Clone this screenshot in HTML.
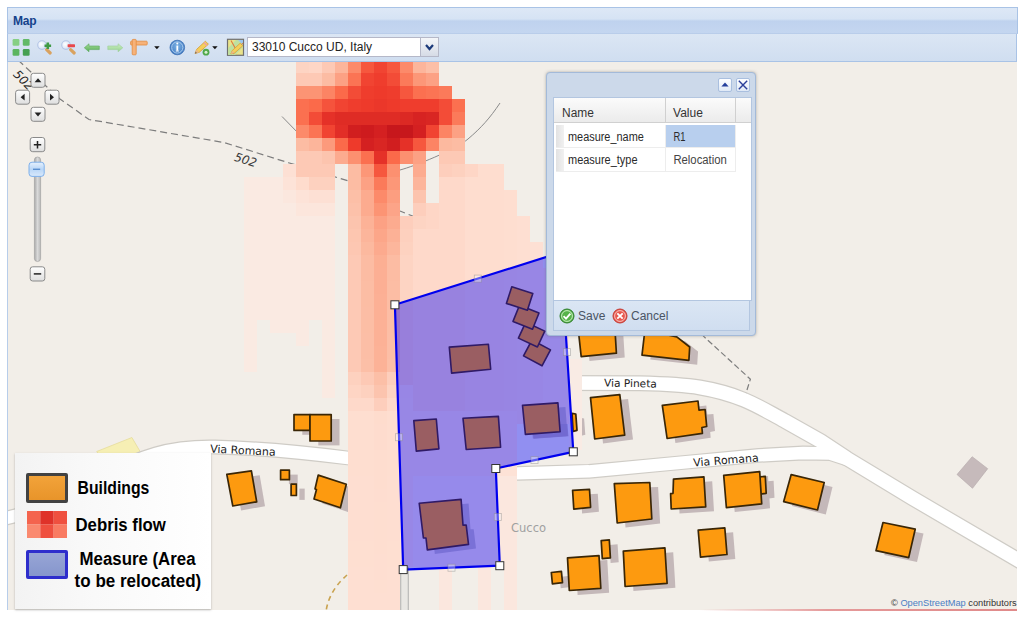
<!DOCTYPE html>
<html><head><meta charset="utf-8"><title>Map</title>
<style>
html,body{margin:0;padding:0;background:#fff;}
body{width:1024px;height:622px;position:relative;overflow:hidden;font-family:"Liberation Sans",sans-serif;}
.abs{position:absolute;}
#hdr{left:7px;top:7px;width:1011px;height:27px;box-sizing:border-box;border:1px solid #a9c3e6;border-bottom-color:#b9cdea;
 background:linear-gradient(#dde8f6 0%,#d6e3f4 44%,#bfd2ee 52%,#c4d6f0 100%);}
#hdr span{position:absolute;left:5px;top:6px;font:bold 12px "Liberation Sans",sans-serif;color:#15428b;letter-spacing:-0.2px}
#tb{left:7px;top:34px;width:1010px;height:28px;box-sizing:border-box;border-left:1px solid #a9c3e6;border-right:1px solid #a9c3e6;border-bottom:1px solid #a9c3e6;
 background:linear-gradient(#dbe6f4,#d0def0);}
#mapframe{left:7px;top:62px;width:1px;height:548px;background:#b7cdea;}
#combo{left:247px;top:37px;width:174px;height:20px;box-sizing:border-box;border:1px solid #b5b8c8;background:#fff;font:12px "Liberation Sans",sans-serif;color:#222;line-height:19px;padding-left:4px;white-space:nowrap}
#trig{left:421px;top:37px;width:18px;height:20px;box-sizing:border-box;border:1px solid #b5b8c8;border-left:none;background:linear-gradient(#f4f6f9,#d6dbe6);}
/* dialog */
#dlg{left:546px;top:72px;width:210px;height:264px;box-sizing:border-box;border:1px solid #a3bad9;border-radius:4px;background:#ccd9ea;box-shadow:0 0 3px rgba(100,100,100,.5)}
#dlg .body{left:6px;top:24px;width:199px;height:204px;background:#fff;border:1px solid #b3c6e0;box-sizing:border-box}
#dlg .gh{left:0;top:0;width:197px;height:25px;background:linear-gradient(#fbfbfb,#ebebeb);border-bottom:1px solid #d0d0d0;box-sizing:border-box}
#dlg .foot{left:6px;top:228px;width:197px;height:30px;background:linear-gradient(#dbe6f4,#d0def0);border:1px solid #b3c6e0;border-top:none;box-sizing:border-box}
.seg{font-family:"Liberation Sans",sans-serif;font-size:12.5px;color:#222;white-space:nowrap}
.tool{width:14px;height:14px;box-sizing:border-box;border:1px solid #a9bfdf;border-radius:2px;background:linear-gradient(#fdfeff,#dfe9f6)}
/* legend */
#legend{left:15px;top:453px;width:196px;height:156px;background:linear-gradient(90deg,#f3f3f3,#f9f9f9 40%,#ffffff 100%);box-shadow:0 1px 2px rgba(120,120,120,.5)}
.lt{font:bold 15.5px "Liberation Sans",sans-serif;color:#111;white-space:nowrap}
.navb{width:15px;height:15px;box-sizing:border-box;border:1px solid #8c8c8c;border-radius:3px;background:linear-gradient(#ffffff,#e4e4e4);box-shadow:0 0 0 1px rgba(255,255,255,.6)}
</style></head><body>
<div id="hdr" class="abs"><span>Map</span></div>
<div id="tb" class="abs"></div>
<div id="mapframe" class="abs"></div>
<svg width="1009" height="548" viewBox="8 62 1009 548" style="position:absolute;left:8px;top:62px">
<g><rect x="0" y="0" width="1024" height="622" fill="#f2eee8"/>
<polygon points="96.7,451.5 131.9,437.5 141.0,453.0 110.0,470.0" fill="#f6efb4" stroke="#e6dc9a" stroke-width="0.8"/>
<path d="M-5,520 C30,515 60,500 100,478 S170,446 215,447 S300,452 348,458 L420,466 L496,474 L517.8,473.4 L589,471.3 L678,463 L759,455.4 L803,453 L830,453.5 L850,460" fill="none" stroke="#cfccc6" stroke-width="14.8" stroke-linejoin="round"/>
<path d="M560,383 L640,383.3 C670,384 690,385.8 700,387.5 C718,390.5 730,394 744,399.8 C760,406.5 770,413 785,421 L820.5,441 L847,458.5 L912,497.9 L1030,567" fill="none" stroke="#cfccc6" stroke-width="16.0" stroke-linejoin="round"/>
<path d="M-5,520 C30,515 60,500 100,478 S170,446 215,447 S300,452 348,458 L420,466 L496,474 L517.8,473.4 L589,471.3 L678,463 L759,455.4 L803,453 L830,453.5 L850,460" fill="none" stroke="#ffffff" stroke-width="12.4" stroke-linejoin="round"/>
<path d="M560,383 L640,383.3 C670,384 690,385.8 700,387.5 C718,390.5 730,394 744,399.8 C760,406.5 770,413 785,421 L820.5,441 L847,458.5 L912,497.9 L1030,567" fill="none" stroke="#ffffff" stroke-width="13.6" stroke-linejoin="round"/>
<path d="M404.5,560 L404.5,640" fill="none" stroke="#a9a9a9" stroke-width="8.4"/><path d="M404.5,560 L404.5,640" fill="none" stroke="#e9e7e3" stroke-width="6.6"/>
<path d="M18,60 L60,99 L89,119.5 L224,142.5 L288.5,162.7 L348.6,181 L400,211 L420,219" fill="none" stroke="#7d7d7d" stroke-width="1.2" stroke-dasharray="7,4"/>
<path d="M690,320 L704,336.7 L750.4,379.2 L746,393" fill="none" stroke="#7d7d7d" stroke-width="1.2" stroke-dasharray="6,3"/>
<path d="M282,116.5 L300,135 C315,148 330,155 348,161 S385,174 400,170 S455,150 468,139 S490,118 500,103" fill="none" stroke="#8a8a8a" stroke-width="1"/>
<path d="M347,575 C338,583 328,595 326,612" fill="none" stroke="#c9a24f" stroke-width="1.6" stroke-dasharray="5,4"/></g>
<g><polygon points="302.3,419.0 318.3,419.0 318.3,434.8 302.3,434.8" fill="#c4b8b9"/>
<polygon points="318.3,419.0 339.5,419.0 339.5,445.4 318.3,445.4" fill="#c4b8b9"/>
<polygon points="235.1,478.8 259.7,475.3 265.0,506.2 241.1,510.4" fill="#c4b8b9"/>
<polygon points="288.9,474.6 297.7,474.6 297.7,484.1 288.9,484.1" fill="#c4b8b9"/>
<polygon points="299.4,488.6 304.7,488.6 304.7,499.9 299.4,499.9" fill="#c4b8b9"/>
<polygon points="326.5,479.5 354.6,488.6 348.7,512.2 322.3,503.4 324.8,493.9 323.3,493.4" fill="#c4b8b9"/>
<polygon points="799.5,479.0 832.5,486.9 825.8,514.4 792.0,506.0" fill="#c4b8b9"/>
<polygon points="891.3,526.9 923.5,533.6 917.0,562.0 884.3,555.0" fill="#c4b8b9"/>
<polygon points="586.6,334.4 623.3,334.4 624.7,357.6 589.5,361.0" fill="#c4b8b9"/>
<polygon points="653.2,334.4 685.1,341.2 698.0,351.4 697.2,364.7 650.3,359.5" fill="#c4b8b9"/>
<polygon points="598.8,402.0 628.1,399.1 633.0,439.6 603.0,443.4" fill="#c4b8b9"/>
<polygon points="670.6,409.7 706.3,405.4 707.3,414.5 713.4,413.9 715.0,430.9 710.2,431.9 710.7,437.7 675.4,442.9" fill="#c4b8b9"/>
<polygon points="580.3,417.8 584.1,418.4 585.3,434.8 581.4,435.7" fill="#c4b8b9"/>
<polygon points="580.9,494.8 597.8,493.7 598.9,511.7 582.1,513.5" fill="#c4b8b9"/>
<polygon points="622.6,488.0 658.1,486.9 660.1,523.4 625.5,527.4" fill="#c4b8b9"/>
<polygon points="609.5,545.0 617.6,544.3 618.7,562.3 610.6,563.0" fill="#c4b8b9"/>
<polygon points="575.8,562.3 607.3,560.0 609.1,592.7 577.6,594.9" fill="#c4b8b9"/>
<polygon points="559.6,576.9 569.7,575.8 570.8,587.0 560.7,588.2" fill="#c4b8b9"/>
<polygon points="631.6,555.5 673.2,552.2 675.4,587.7 633.4,590.9" fill="#c4b8b9"/>
<polygon points="681.8,483.5 712.2,481.3 714.0,511.2 679.5,513.4 678.9,498.1 681.3,497.7" fill="#c4b8b9"/>
<polygon points="768.0,481.3 773.6,480.8 774.5,497.7 768.8,498.6" fill="#c4b8b9"/>
<polygon points="732.0,479.7 768.0,476.1 770.0,508.3 734.7,512.1" fill="#c4b8b9"/>
<polygon points="706.5,534.6 733.1,532.3 735.3,558.9 708.8,561.6" fill="#c4b8b9"/>
<polygon points="457.6,351.5 496.7,348.6 499.0,373.7 459.9,377.5" fill="#c4b8b9"/>
<polygon points="422.1,425.0 444.6,423.4 447.2,453.3 424.6,455.5" fill="#c4b8b9"/>
<polygon points="471.3,422.7 506.7,420.8 508.9,451.7 474.5,453.9" fill="#c4b8b9"/>
<polygon points="530.8,409.8 566.2,407.3 568.4,436.2 533.7,438.8" fill="#c4b8b9"/>
<polygon points="427.5,507.6 469.4,503.8 471.3,529.5 474.5,529.5 476.8,548.8 435.6,554.3 434.3,542.4 431.7,542.4" fill="#c4b8b9"/>
<polygon points="540.3,344.4 558.8,354.3 550.3,370.2 531.8,360.3" fill="#c4b8b9"/>
<polygon points="534.1,326.6 553.1,335.5 545.7,351.4 526.7,342.5" fill="#c4b8b9"/>
<polygon points="527.8,309.6 547.3,317.4 540.8,333.6 521.3,325.8" fill="#c4b8b9"/>
<polygon points="520.1,291.2 541.1,298.0 535.7,314.6 514.7,307.8" fill="#c4b8b9"/>
<polygon points="972.2,456.7 987.7,468.7 972.5,488.3 957.0,474.5" fill="#c6babb" stroke="#b3a8a9" stroke-width="0.6"/></g>
<g shape-rendering="crispEdges"><rect x="295.7" y="59.6" width="13.16" height="13.16" fill="#fdd4c3"/>
<rect x="308.7" y="59.6" width="13.16" height="13.16" fill="#fed6c6"/>
<rect x="321.7" y="59.6" width="13.16" height="13.16" fill="#fdc9b5"/>
<rect x="334.7" y="59.6" width="13.16" height="13.16" fill="#fcb59b"/>
<rect x="347.7" y="59.6" width="13.16" height="13.16" fill="#fc8a6a"/>
<rect x="360.8" y="59.6" width="13.16" height="13.16" fill="#f6573e"/>
<rect x="373.8" y="59.6" width="13.16" height="13.16" fill="#f14432"/>
<rect x="386.8" y="59.6" width="13.16" height="13.16" fill="#f6573e"/>
<rect x="399.8" y="59.6" width="13.16" height="13.16" fill="#fc8a6a"/>
<rect x="412.8" y="59.6" width="13.16" height="13.16" fill="#fcb59b"/>
<rect x="425.8" y="59.6" width="13.16" height="13.16" fill="#fcbfa7"/>
<rect x="295.7" y="72.6" width="13.16" height="13.16" fill="#fdc9b5"/>
<rect x="308.7" y="72.6" width="13.16" height="13.16" fill="#fdc9b5"/>
<rect x="321.7" y="72.6" width="13.16" height="13.16" fill="#fcbca3"/>
<rect x="334.7" y="72.6" width="13.16" height="13.16" fill="#fca184"/>
<rect x="347.7" y="72.6" width="13.16" height="13.16" fill="#fb7454"/>
<rect x="360.8" y="72.6" width="13.16" height="13.16" fill="#f14432"/>
<rect x="373.8" y="72.6" width="13.16" height="13.16" fill="#ef3d2d"/>
<rect x="386.8" y="72.6" width="13.16" height="13.16" fill="#f34c37"/>
<rect x="399.8" y="72.6" width="13.16" height="13.16" fill="#fb7a5a"/>
<rect x="412.8" y="72.6" width="13.16" height="13.16" fill="#fc9778"/>
<rect x="425.8" y="72.6" width="13.16" height="13.16" fill="#fca184"/>
<rect x="295.7" y="85.6" width="13.16" height="13.16" fill="#fc9474"/>
<rect x="308.7" y="85.6" width="13.16" height="13.16" fill="#fc9474"/>
<rect x="321.7" y="85.6" width="13.16" height="13.16" fill="#fc8464"/>
<rect x="334.7" y="85.6" width="13.16" height="13.16" fill="#fb6a4a"/>
<rect x="347.7" y="85.6" width="13.16" height="13.16" fill="#f34c37"/>
<rect x="360.8" y="85.6" width="13.16" height="13.16" fill="#ef3d2d"/>
<rect x="373.8" y="85.6" width="13.16" height="13.16" fill="#ee3a2b"/>
<rect x="386.8" y="85.6" width="13.16" height="13.16" fill="#ef3d2d"/>
<rect x="399.8" y="85.6" width="13.16" height="13.16" fill="#f6573e"/>
<rect x="412.8" y="85.6" width="13.16" height="13.16" fill="#fb7050"/>
<rect x="425.8" y="85.6" width="13.16" height="13.16" fill="#fb7454"/>
<rect x="438.8" y="85.6" width="13.16" height="13.16" fill="#fb7a5a"/>
<rect x="295.7" y="98.6" width="13.16" height="13.16" fill="#fb7050"/>
<rect x="308.7" y="98.6" width="13.16" height="13.16" fill="#fb6a4a"/>
<rect x="321.7" y="98.6" width="13.16" height="13.16" fill="#f5533c"/>
<rect x="334.7" y="98.6" width="13.16" height="13.16" fill="#f14432"/>
<rect x="347.7" y="98.6" width="13.16" height="13.16" fill="#ef3d2d"/>
<rect x="360.8" y="98.6" width="13.16" height="13.16" fill="#ee3a2b"/>
<rect x="373.8" y="98.6" width="13.16" height="13.16" fill="#eb372a"/>
<rect x="386.8" y="98.6" width="13.16" height="13.16" fill="#ee3a2b"/>
<rect x="399.8" y="98.6" width="13.16" height="13.16" fill="#ef3d2d"/>
<rect x="412.8" y="98.6" width="13.16" height="13.16" fill="#ef3d2d"/>
<rect x="425.8" y="98.6" width="13.16" height="13.16" fill="#ef3d2d"/>
<rect x="438.8" y="98.6" width="13.16" height="13.16" fill="#f34c37"/>
<rect x="451.8" y="98.6" width="13.16" height="13.16" fill="#fb7050"/>
<rect x="295.7" y="111.6" width="13.16" height="13.16" fill="#fb7050"/>
<rect x="308.7" y="111.6" width="13.16" height="13.16" fill="#f34c37"/>
<rect x="321.7" y="111.6" width="13.16" height="13.16" fill="#e53128"/>
<rect x="334.7" y="111.6" width="13.16" height="13.16" fill="#df2c25"/>
<rect x="347.7" y="111.6" width="13.16" height="13.16" fill="#df2c25"/>
<rect x="360.8" y="111.6" width="13.16" height="13.16" fill="#df2c25"/>
<rect x="373.8" y="111.6" width="13.16" height="13.16" fill="#df2c25"/>
<rect x="386.8" y="111.6" width="13.16" height="13.16" fill="#df2c25"/>
<rect x="399.8" y="111.6" width="13.16" height="13.16" fill="#dc2924"/>
<rect x="412.8" y="111.6" width="13.16" height="13.16" fill="#d72322"/>
<rect x="425.8" y="111.6" width="13.16" height="13.16" fill="#d92623"/>
<rect x="438.8" y="111.6" width="13.16" height="13.16" fill="#f34c37"/>
<rect x="451.8" y="111.6" width="13.16" height="13.16" fill="#fb7a5a"/>
<rect x="295.7" y="124.7" width="13.16" height="13.16" fill="#fc8a6a"/>
<rect x="308.7" y="124.7" width="13.16" height="13.16" fill="#fb7454"/>
<rect x="321.7" y="124.7" width="13.16" height="13.16" fill="#f14432"/>
<rect x="334.7" y="124.7" width="13.16" height="13.16" fill="#e22e27"/>
<rect x="347.7" y="124.7" width="13.16" height="13.16" fill="#d11e1f"/>
<rect x="360.8" y="124.7" width="13.16" height="13.16" fill="#ce1b1e"/>
<rect x="373.8" y="124.7" width="13.16" height="13.16" fill="#d42021"/>
<rect x="386.8" y="124.7" width="13.16" height="13.16" fill="#c7171c"/>
<rect x="399.8" y="124.7" width="13.16" height="13.16" fill="#c7171c"/>
<rect x="412.8" y="124.7" width="13.16" height="13.16" fill="#d42021"/>
<rect x="425.8" y="124.7" width="13.16" height="13.16" fill="#f14432"/>
<rect x="438.8" y="124.7" width="13.16" height="13.16" fill="#fc8464"/>
<rect x="451.8" y="124.7" width="13.16" height="13.16" fill="#fca184"/>
<rect x="295.7" y="137.7" width="13.16" height="13.16" fill="#fcbca3"/>
<rect x="308.7" y="137.7" width="13.16" height="13.16" fill="#fcb59b"/>
<rect x="321.7" y="137.7" width="13.16" height="13.16" fill="#fc9a7c"/>
<rect x="334.7" y="137.7" width="13.16" height="13.16" fill="#fb6a4a"/>
<rect x="347.7" y="137.7" width="13.16" height="13.16" fill="#ee3a2b"/>
<rect x="360.8" y="137.7" width="13.16" height="13.16" fill="#d42021"/>
<rect x="373.8" y="137.7" width="13.16" height="13.16" fill="#d92623"/>
<rect x="386.8" y="137.7" width="13.16" height="13.16" fill="#d11e1f"/>
<rect x="399.8" y="137.7" width="13.16" height="13.16" fill="#e53128"/>
<rect x="412.8" y="137.7" width="13.16" height="13.16" fill="#f6573e"/>
<rect x="425.8" y="137.7" width="13.16" height="13.16" fill="#fc8464"/>
<rect x="438.8" y="137.7" width="13.16" height="13.16" fill="#fcb99f"/>
<rect x="451.8" y="137.7" width="13.16" height="13.16" fill="#fcbca3"/>
<rect x="295.7" y="150.7" width="13.16" height="13.16" fill="#fdc9b5"/>
<rect x="308.7" y="150.7" width="13.16" height="13.16" fill="#fdc9b5"/>
<rect x="321.7" y="150.7" width="13.16" height="13.16" fill="#fcc4ae"/>
<rect x="334.7" y="150.7" width="13.16" height="13.16" fill="#fcab8f"/>
<rect x="347.7" y="150.7" width="13.16" height="13.16" fill="#fc9070"/>
<rect x="360.8" y="150.7" width="13.16" height="13.16" fill="#fb7050"/>
<rect x="373.8" y="150.7" width="13.16" height="13.16" fill="#e53128"/>
<rect x="386.8" y="150.7" width="13.16" height="13.16" fill="#fb6a4a"/>
<rect x="399.8" y="150.7" width="13.16" height="13.16" fill="#fc9070"/>
<rect x="412.8" y="150.7" width="13.16" height="13.16" fill="#fca184"/>
<rect x="438.8" y="150.7" width="13.16" height="13.16" fill="#fdc9b5"/>
<rect x="451.8" y="150.7" width="13.16" height="13.16" fill="#fdc9b5"/>
<rect x="282.7" y="163.7" width="13.16" height="13.16" fill="#fde0d4"/>
<rect x="295.7" y="163.7" width="13.16" height="13.16" fill="#fdc9b5"/>
<rect x="308.7" y="163.7" width="13.16" height="13.16" fill="#fdc9b5"/>
<rect x="321.7" y="163.7" width="13.16" height="13.16" fill="#fdc9b5"/>
<rect x="347.7" y="163.7" width="13.16" height="13.16" fill="#fcbca3"/>
<rect x="360.8" y="163.7" width="13.16" height="13.16" fill="#fc9778"/>
<rect x="373.8" y="163.7" width="13.16" height="13.16" fill="#f6573e"/>
<rect x="386.8" y="163.7" width="13.16" height="13.16" fill="#fc9070"/>
<rect x="412.8" y="163.7" width="13.16" height="13.16" fill="#fcab8f"/>
<rect x="438.8" y="163.7" width="13.16" height="13.16" fill="#fdcebc"/>
<rect x="451.8" y="163.7" width="13.16" height="13.16" fill="#fdd1bf"/>
<rect x="464.8" y="163.7" width="13.16" height="13.16" fill="#fed6c6"/>
<rect x="477.8" y="163.7" width="13.16" height="13.16" fill="#feddcf"/>
<rect x="490.9" y="163.7" width="13.16" height="13.16" fill="#feddcf"/>
<rect x="243.7" y="176.7" width="13.16" height="13.16" fill="#faeae2"/>
<rect x="256.7" y="176.7" width="13.16" height="13.16" fill="#faeae2"/>
<rect x="269.7" y="176.7" width="13.16" height="13.16" fill="#faeae2"/>
<rect x="282.7" y="176.7" width="13.16" height="13.16" fill="#fde3d8"/>
<rect x="295.7" y="176.7" width="13.16" height="13.16" fill="#fedccd"/>
<rect x="308.7" y="176.7" width="13.16" height="13.16" fill="#fdd1bf"/>
<rect x="321.7" y="176.7" width="13.16" height="13.16" fill="#fdd1bf"/>
<rect x="347.7" y="176.7" width="13.16" height="13.16" fill="#fcbca3"/>
<rect x="360.8" y="176.7" width="13.16" height="13.16" fill="#fca184"/>
<rect x="373.8" y="176.7" width="13.16" height="13.16" fill="#fb7a5a"/>
<rect x="386.8" y="176.7" width="13.16" height="13.16" fill="#fc9778"/>
<rect x="412.8" y="176.7" width="13.16" height="13.16" fill="#fcb59b"/>
<rect x="438.8" y="176.7" width="13.16" height="13.16" fill="#fed9ca"/>
<rect x="451.8" y="176.7" width="13.16" height="13.16" fill="#fed9ca"/>
<rect x="464.8" y="176.7" width="13.16" height="13.16" fill="#feddcf"/>
<rect x="477.8" y="176.7" width="13.16" height="13.16" fill="#feddcf"/>
<rect x="490.9" y="176.7" width="13.16" height="13.16" fill="#feddcf"/>
<rect x="243.7" y="189.7" width="13.16" height="13.16" fill="#faeae2"/>
<rect x="256.7" y="189.7" width="13.16" height="13.16" fill="#faeae2"/>
<rect x="269.7" y="189.7" width="13.16" height="13.16" fill="#faeae2"/>
<rect x="282.7" y="189.7" width="13.16" height="13.16" fill="#fbe7de"/>
<rect x="295.7" y="189.7" width="13.16" height="13.16" fill="#fde3d8"/>
<rect x="308.7" y="189.7" width="13.16" height="13.16" fill="#fde0d4"/>
<rect x="321.7" y="189.7" width="13.16" height="13.16" fill="#fde0d4"/>
<rect x="347.7" y="189.7" width="13.16" height="13.16" fill="#fcbfa7"/>
<rect x="360.8" y="189.7" width="13.16" height="13.16" fill="#fcab8f"/>
<rect x="373.8" y="189.7" width="13.16" height="13.16" fill="#fc8a6a"/>
<rect x="386.8" y="189.7" width="13.16" height="13.16" fill="#fc9e80"/>
<rect x="412.8" y="189.7" width="13.16" height="13.16" fill="#fcc4ae"/>
<rect x="438.8" y="189.7" width="13.16" height="13.16" fill="#fed9ca"/>
<rect x="451.8" y="189.7" width="13.16" height="13.16" fill="#fed9ca"/>
<rect x="464.8" y="189.7" width="13.16" height="13.16" fill="#feddcf"/>
<rect x="477.8" y="189.7" width="13.16" height="13.16" fill="#feddcf"/>
<rect x="490.9" y="189.7" width="13.16" height="13.16" fill="#feddcf"/>
<rect x="503.9" y="189.7" width="13.16" height="13.16" fill="#feded0"/>
<rect x="243.7" y="202.7" width="13.16" height="13.16" fill="#faeae2"/>
<rect x="256.7" y="202.7" width="13.16" height="13.16" fill="#faeae2"/>
<rect x="269.7" y="202.7" width="13.16" height="13.16" fill="#faeae2"/>
<rect x="282.7" y="202.7" width="13.16" height="13.16" fill="#faeae2"/>
<rect x="295.7" y="202.7" width="13.16" height="13.16" fill="#fce6dc"/>
<rect x="308.7" y="202.7" width="13.16" height="13.16" fill="#fce6dc"/>
<rect x="321.7" y="202.7" width="13.16" height="13.16" fill="#fce6dc"/>
<rect x="347.7" y="202.7" width="13.16" height="13.16" fill="#fcc1aa"/>
<rect x="360.8" y="202.7" width="13.16" height="13.16" fill="#fcab8f"/>
<rect x="373.8" y="202.7" width="13.16" height="13.16" fill="#fc9474"/>
<rect x="386.8" y="202.7" width="13.16" height="13.16" fill="#fca488"/>
<rect x="412.8" y="202.7" width="13.16" height="13.16" fill="#fdcebc"/>
<rect x="425.8" y="202.7" width="13.16" height="13.16" fill="#fed6c6"/>
<rect x="438.8" y="202.7" width="13.16" height="13.16" fill="#fed9ca"/>
<rect x="451.8" y="202.7" width="13.16" height="13.16" fill="#fed9ca"/>
<rect x="464.8" y="202.7" width="13.16" height="13.16" fill="#feddcf"/>
<rect x="477.8" y="202.7" width="13.16" height="13.16" fill="#feddcf"/>
<rect x="490.9" y="202.7" width="13.16" height="13.16" fill="#feddcf"/>
<rect x="503.9" y="202.7" width="13.16" height="13.16" fill="#feded0"/>
<rect x="243.7" y="215.7" width="13.16" height="13.16" fill="#faeae2"/>
<rect x="256.7" y="215.7" width="13.16" height="13.16" fill="#faeae2"/>
<rect x="269.7" y="215.7" width="13.16" height="13.16" fill="#faeae2"/>
<rect x="282.7" y="215.7" width="13.16" height="13.16" fill="#faeae2"/>
<rect x="295.7" y="215.7" width="13.16" height="13.16" fill="#faeae2"/>
<rect x="308.7" y="215.7" width="13.16" height="13.16" fill="#faeae2"/>
<rect x="321.7" y="215.7" width="13.16" height="13.16" fill="#faeae2"/>
<rect x="347.7" y="215.7" width="13.16" height="13.16" fill="#fcc4ae"/>
<rect x="360.8" y="215.7" width="13.16" height="13.16" fill="#fcb297"/>
<rect x="373.8" y="215.7" width="13.16" height="13.16" fill="#fca184"/>
<rect x="386.8" y="215.7" width="13.16" height="13.16" fill="#fcab8f"/>
<rect x="399.8" y="215.7" width="13.16" height="13.16" fill="#fdcebc"/>
<rect x="412.8" y="215.7" width="13.16" height="13.16" fill="#fdd4c3"/>
<rect x="425.8" y="215.7" width="13.16" height="13.16" fill="#fed6c6"/>
<rect x="438.8" y="215.7" width="13.16" height="13.16" fill="#fed9ca"/>
<rect x="451.8" y="215.7" width="13.16" height="13.16" fill="#fed9ca"/>
<rect x="464.8" y="215.7" width="13.16" height="13.16" fill="#feddcf"/>
<rect x="477.8" y="215.7" width="13.16" height="13.16" fill="#feddcf"/>
<rect x="490.9" y="215.7" width="13.16" height="13.16" fill="#feddcf"/>
<rect x="503.9" y="215.7" width="13.16" height="13.16" fill="#feded0"/>
<rect x="516.9" y="215.7" width="13.16" height="13.16" fill="#fedfd2"/>
<rect x="243.7" y="228.7" width="13.16" height="13.16" fill="#faeae2"/>
<rect x="256.7" y="228.7" width="13.16" height="13.16" fill="#faeae2"/>
<rect x="269.7" y="228.7" width="13.16" height="13.16" fill="#faeae2"/>
<rect x="282.7" y="228.7" width="13.16" height="13.16" fill="#faeae2"/>
<rect x="295.7" y="228.7" width="13.16" height="13.16" fill="#faeae2"/>
<rect x="308.7" y="228.7" width="13.16" height="13.16" fill="#faeae2"/>
<rect x="321.7" y="228.7" width="13.16" height="13.16" fill="#faeae2"/>
<rect x="347.7" y="228.7" width="13.16" height="13.16" fill="#fdc6b0"/>
<rect x="360.8" y="228.7" width="13.16" height="13.16" fill="#fcb59b"/>
<rect x="373.8" y="228.7" width="13.16" height="13.16" fill="#fca689"/>
<rect x="386.8" y="228.7" width="13.16" height="13.16" fill="#fcb196"/>
<rect x="399.8" y="228.7" width="13.16" height="13.16" fill="#fdd0be"/>
<rect x="412.8" y="228.7" width="13.16" height="13.16" fill="#fed9ca"/>
<rect x="425.8" y="228.7" width="13.16" height="13.16" fill="#fed9ca"/>
<rect x="438.8" y="228.7" width="13.16" height="13.16" fill="#fed9ca"/>
<rect x="451.8" y="228.7" width="13.16" height="13.16" fill="#fed9ca"/>
<rect x="464.8" y="228.7" width="13.16" height="13.16" fill="#feddcf"/>
<rect x="477.8" y="228.7" width="13.16" height="13.16" fill="#feddcf"/>
<rect x="490.9" y="228.7" width="13.16" height="13.16" fill="#feddcf"/>
<rect x="503.9" y="228.7" width="13.16" height="13.16" fill="#feded0"/>
<rect x="516.9" y="228.7" width="13.16" height="13.16" fill="#fedfd2"/>
<rect x="243.7" y="241.7" width="13.16" height="13.16" fill="#faeae2"/>
<rect x="256.7" y="241.7" width="13.16" height="13.16" fill="#faeae2"/>
<rect x="269.7" y="241.7" width="13.16" height="13.16" fill="#faeae2"/>
<rect x="282.7" y="241.7" width="13.16" height="13.16" fill="#faeae2"/>
<rect x="295.7" y="241.7" width="13.16" height="13.16" fill="#faeae2"/>
<rect x="308.7" y="241.7" width="13.16" height="13.16" fill="#faeae2"/>
<rect x="321.7" y="241.7" width="13.16" height="13.16" fill="#faeae2"/>
<rect x="347.7" y="241.7" width="13.16" height="13.16" fill="#fdc7b2"/>
<rect x="360.8" y="241.7" width="13.16" height="13.16" fill="#fcb99f"/>
<rect x="373.8" y="241.7" width="13.16" height="13.16" fill="#fcaa8e"/>
<rect x="386.8" y="241.7" width="13.16" height="13.16" fill="#fcb69c"/>
<rect x="399.8" y="241.7" width="13.16" height="13.16" fill="#fdd2c0"/>
<rect x="412.8" y="241.7" width="13.16" height="13.16" fill="#fed9ca"/>
<rect x="425.8" y="241.7" width="13.16" height="13.16" fill="#fed9ca"/>
<rect x="438.8" y="241.7" width="13.16" height="13.16" fill="#fed9ca"/>
<rect x="451.8" y="241.7" width="13.16" height="13.16" fill="#fed9ca"/>
<rect x="464.8" y="241.7" width="13.16" height="13.16" fill="#feddcf"/>
<rect x="477.8" y="241.7" width="13.16" height="13.16" fill="#feddcf"/>
<rect x="490.9" y="241.7" width="13.16" height="13.16" fill="#feddcf"/>
<rect x="503.9" y="241.7" width="13.16" height="13.16" fill="#feded0"/>
<rect x="516.9" y="241.7" width="13.16" height="13.16" fill="#fedfd2"/>
<rect x="529.9" y="241.7" width="13.16" height="13.16" fill="#fde0d4"/>
<rect x="243.7" y="254.8" width="13.16" height="13.16" fill="#faeae2"/>
<rect x="256.7" y="254.8" width="13.16" height="13.16" fill="#faeae2"/>
<rect x="269.7" y="254.8" width="13.16" height="13.16" fill="#faeae2"/>
<rect x="282.7" y="254.8" width="13.16" height="13.16" fill="#faeae2"/>
<rect x="295.7" y="254.8" width="13.16" height="13.16" fill="#faeae2"/>
<rect x="308.7" y="254.8" width="13.16" height="13.16" fill="#faeae2"/>
<rect x="321.7" y="254.8" width="13.16" height="13.16" fill="#faeae2"/>
<rect x="347.7" y="254.8" width="13.16" height="13.16" fill="#fdc9b5"/>
<rect x="360.8" y="254.8" width="13.16" height="13.16" fill="#fcbca3"/>
<rect x="373.8" y="254.8" width="13.16" height="13.16" fill="#fcaf93"/>
<rect x="386.8" y="254.8" width="13.16" height="13.16" fill="#fcbca3"/>
<rect x="399.8" y="254.8" width="13.16" height="13.16" fill="#fdd4c3"/>
<rect x="412.8" y="254.8" width="13.16" height="13.16" fill="#fed9ca"/>
<rect x="425.8" y="254.8" width="13.16" height="13.16" fill="#fed9ca"/>
<rect x="438.8" y="254.8" width="13.16" height="13.16" fill="#fed9ca"/>
<rect x="451.8" y="254.8" width="13.16" height="13.16" fill="#fed9ca"/>
<rect x="464.8" y="254.8" width="13.16" height="13.16" fill="#feddcf"/>
<rect x="477.8" y="254.8" width="13.16" height="13.16" fill="#feddcf"/>
<rect x="490.9" y="254.8" width="13.16" height="13.16" fill="#feddcf"/>
<rect x="503.9" y="254.8" width="13.16" height="13.16" fill="#feded0"/>
<rect x="516.9" y="254.8" width="13.16" height="13.16" fill="#fedfd2"/>
<rect x="529.9" y="254.8" width="13.16" height="13.16" fill="#fde0d4"/>
<rect x="243.7" y="267.8" width="13.16" height="13.16" fill="#faeae2"/>
<rect x="256.7" y="267.8" width="13.16" height="13.16" fill="#faeae2"/>
<rect x="269.7" y="267.8" width="13.16" height="13.16" fill="#faeae2"/>
<rect x="282.7" y="267.8" width="13.16" height="13.16" fill="#faeae2"/>
<rect x="295.7" y="267.8" width="13.16" height="13.16" fill="#faeae2"/>
<rect x="308.7" y="267.8" width="13.16" height="13.16" fill="#faeae2"/>
<rect x="321.7" y="267.8" width="13.16" height="13.16" fill="#faeae2"/>
<rect x="347.7" y="267.8" width="13.16" height="13.16" fill="#fdc9b5"/>
<rect x="360.8" y="267.8" width="13.16" height="13.16" fill="#fcbca3"/>
<rect x="373.8" y="267.8" width="13.16" height="13.16" fill="#fcaf94"/>
<rect x="386.8" y="267.8" width="13.16" height="13.16" fill="#fcbca3"/>
<rect x="399.8" y="267.8" width="13.16" height="13.16" fill="#fdd4c3"/>
<rect x="412.8" y="267.8" width="13.16" height="13.16" fill="#fed9ca"/>
<rect x="425.8" y="267.8" width="13.16" height="13.16" fill="#fed9ca"/>
<rect x="438.8" y="267.8" width="13.16" height="13.16" fill="#fed9ca"/>
<rect x="451.8" y="267.8" width="13.16" height="13.16" fill="#fed9ca"/>
<rect x="464.8" y="267.8" width="13.16" height="13.16" fill="#feddcf"/>
<rect x="477.8" y="267.8" width="13.16" height="13.16" fill="#feddcf"/>
<rect x="490.9" y="267.8" width="13.16" height="13.16" fill="#feddcf"/>
<rect x="503.9" y="267.8" width="13.16" height="13.16" fill="#feded0"/>
<rect x="516.9" y="267.8" width="13.16" height="13.16" fill="#fedfd2"/>
<rect x="529.9" y="267.8" width="13.16" height="13.16" fill="#fde0d4"/>
<rect x="542.9" y="267.8" width="13.16" height="13.16" fill="#fde3d8"/>
<rect x="555.9" y="267.8" width="13.16" height="13.16" fill="#fde3d8"/>
<rect x="243.7" y="280.8" width="13.16" height="13.16" fill="#faeae2"/>
<rect x="256.7" y="280.8" width="13.16" height="13.16" fill="#faeae2"/>
<rect x="269.7" y="280.8" width="13.16" height="13.16" fill="#faeae2"/>
<rect x="282.7" y="280.8" width="13.16" height="13.16" fill="#faeae2"/>
<rect x="295.7" y="280.8" width="13.16" height="13.16" fill="#faeae2"/>
<rect x="308.7" y="280.8" width="13.16" height="13.16" fill="#faeae2"/>
<rect x="321.7" y="280.8" width="13.16" height="13.16" fill="#faeae2"/>
<rect x="347.7" y="280.8" width="13.16" height="13.16" fill="#fdc9b5"/>
<rect x="360.8" y="280.8" width="13.16" height="13.16" fill="#fcbda4"/>
<rect x="373.8" y="280.8" width="13.16" height="13.16" fill="#fcaf94"/>
<rect x="386.8" y="280.8" width="13.16" height="13.16" fill="#fcbda4"/>
<rect x="399.8" y="280.8" width="13.16" height="13.16" fill="#fdd4c3"/>
<rect x="412.8" y="280.8" width="13.16" height="13.16" fill="#fed9ca"/>
<rect x="425.8" y="280.8" width="13.16" height="13.16" fill="#fed9ca"/>
<rect x="438.8" y="280.8" width="13.16" height="13.16" fill="#fed9ca"/>
<rect x="451.8" y="280.8" width="13.16" height="13.16" fill="#fed9ca"/>
<rect x="464.8" y="280.8" width="13.16" height="13.16" fill="#feddcf"/>
<rect x="477.8" y="280.8" width="13.16" height="13.16" fill="#feddcf"/>
<rect x="490.9" y="280.8" width="13.16" height="13.16" fill="#feddcf"/>
<rect x="503.9" y="280.8" width="13.16" height="13.16" fill="#feded0"/>
<rect x="516.9" y="280.8" width="13.16" height="13.16" fill="#fedfd2"/>
<rect x="529.9" y="280.8" width="13.16" height="13.16" fill="#fde0d4"/>
<rect x="542.9" y="280.8" width="13.16" height="13.16" fill="#fde3d8"/>
<rect x="555.9" y="280.8" width="13.16" height="13.16" fill="#fde3d8"/>
<rect x="243.7" y="293.8" width="13.16" height="13.16" fill="#faeae2"/>
<rect x="256.7" y="293.8" width="13.16" height="13.16" fill="#faeae2"/>
<rect x="269.7" y="293.8" width="13.16" height="13.16" fill="#faeae2"/>
<rect x="282.7" y="293.8" width="13.16" height="13.16" fill="#faeae2"/>
<rect x="295.7" y="293.8" width="13.16" height="13.16" fill="#faeae2"/>
<rect x="308.7" y="293.8" width="13.16" height="13.16" fill="#faeae2"/>
<rect x="321.7" y="293.8" width="13.16" height="13.16" fill="#faeae2"/>
<rect x="347.7" y="293.8" width="13.16" height="13.16" fill="#fdc9b5"/>
<rect x="360.8" y="293.8" width="13.16" height="13.16" fill="#fcbda4"/>
<rect x="373.8" y="293.8" width="13.16" height="13.16" fill="#fcb095"/>
<rect x="386.8" y="293.8" width="13.16" height="13.16" fill="#fcbda4"/>
<rect x="399.8" y="293.8" width="13.16" height="13.16" fill="#fdd4c3"/>
<rect x="412.8" y="293.8" width="13.16" height="13.16" fill="#fed9ca"/>
<rect x="425.8" y="293.8" width="13.16" height="13.16" fill="#fed9ca"/>
<rect x="438.8" y="293.8" width="13.16" height="13.16" fill="#fed9ca"/>
<rect x="451.8" y="293.8" width="13.16" height="13.16" fill="#fed9ca"/>
<rect x="464.8" y="293.8" width="13.16" height="13.16" fill="#feddcf"/>
<rect x="477.8" y="293.8" width="13.16" height="13.16" fill="#feddcf"/>
<rect x="490.9" y="293.8" width="13.16" height="13.16" fill="#feddcf"/>
<rect x="503.9" y="293.8" width="13.16" height="13.16" fill="#feded0"/>
<rect x="516.9" y="293.8" width="13.16" height="13.16" fill="#fedfd2"/>
<rect x="529.9" y="293.8" width="13.16" height="13.16" fill="#fde0d4"/>
<rect x="542.9" y="293.8" width="13.16" height="13.16" fill="#fde3d8"/>
<rect x="555.9" y="293.8" width="13.16" height="13.16" fill="#fde3d8"/>
<rect x="243.7" y="306.8" width="13.16" height="13.16" fill="#faeae2"/>
<rect x="256.7" y="306.8" width="13.16" height="13.16" fill="#faeae2"/>
<rect x="269.7" y="306.8" width="13.16" height="13.16" fill="#faeae2"/>
<rect x="282.7" y="306.8" width="13.16" height="13.16" fill="#faeae2"/>
<rect x="295.7" y="306.8" width="13.16" height="13.16" fill="#faeae2"/>
<rect x="308.7" y="306.8" width="13.16" height="13.16" fill="#faeae2"/>
<rect x="321.7" y="306.8" width="13.16" height="13.16" fill="#faeae2"/>
<rect x="347.7" y="306.8" width="13.16" height="13.16" fill="#fdc9b5"/>
<rect x="360.8" y="306.8" width="13.16" height="13.16" fill="#fcbda5"/>
<rect x="373.8" y="306.8" width="13.16" height="13.16" fill="#fcb095"/>
<rect x="386.8" y="306.8" width="13.16" height="13.16" fill="#fcbda5"/>
<rect x="399.8" y="306.8" width="13.16" height="13.16" fill="#fdd4c3"/>
<rect x="412.8" y="306.8" width="13.16" height="13.16" fill="#fed9ca"/>
<rect x="425.8" y="306.8" width="13.16" height="13.16" fill="#fed9ca"/>
<rect x="438.8" y="306.8" width="13.16" height="13.16" fill="#fed9ca"/>
<rect x="451.8" y="306.8" width="13.16" height="13.16" fill="#fed9ca"/>
<rect x="464.8" y="306.8" width="13.16" height="13.16" fill="#feddcf"/>
<rect x="477.8" y="306.8" width="13.16" height="13.16" fill="#feddcf"/>
<rect x="490.9" y="306.8" width="13.16" height="13.16" fill="#feddcf"/>
<rect x="503.9" y="306.8" width="13.16" height="13.16" fill="#feded0"/>
<rect x="516.9" y="306.8" width="13.16" height="13.16" fill="#fedfd2"/>
<rect x="529.9" y="306.8" width="13.16" height="13.16" fill="#fde0d4"/>
<rect x="542.9" y="306.8" width="13.16" height="13.16" fill="#fde3d8"/>
<rect x="555.9" y="306.8" width="13.16" height="13.16" fill="#fde3d8"/>
<rect x="243.7" y="319.8" width="13.16" height="13.16" fill="#faeae2"/>
<rect x="269.7" y="319.8" width="13.16" height="13.16" fill="#faeae2"/>
<rect x="282.7" y="319.8" width="13.16" height="13.16" fill="#faeae2"/>
<rect x="295.7" y="319.8" width="13.16" height="13.16" fill="#faeae2"/>
<rect x="321.7" y="319.8" width="13.16" height="13.16" fill="#faeae2"/>
<rect x="347.7" y="319.8" width="13.16" height="13.16" fill="#fdc9b5"/>
<rect x="360.8" y="319.8" width="13.16" height="13.16" fill="#fcbea5"/>
<rect x="373.8" y="319.8" width="13.16" height="13.16" fill="#fcb196"/>
<rect x="386.8" y="319.8" width="13.16" height="13.16" fill="#fcbea5"/>
<rect x="399.8" y="319.8" width="13.16" height="13.16" fill="#fdd4c3"/>
<rect x="412.8" y="319.8" width="13.16" height="13.16" fill="#fed9ca"/>
<rect x="425.8" y="319.8" width="13.16" height="13.16" fill="#fed9ca"/>
<rect x="438.8" y="319.8" width="13.16" height="13.16" fill="#fed9ca"/>
<rect x="451.8" y="319.8" width="13.16" height="13.16" fill="#fed9ca"/>
<rect x="464.8" y="319.8" width="13.16" height="13.16" fill="#feddcf"/>
<rect x="477.8" y="319.8" width="13.16" height="13.16" fill="#feddcf"/>
<rect x="490.9" y="319.8" width="13.16" height="13.16" fill="#feddcf"/>
<rect x="503.9" y="319.8" width="13.16" height="13.16" fill="#feded0"/>
<rect x="516.9" y="319.8" width="13.16" height="13.16" fill="#fedfd2"/>
<rect x="529.9" y="319.8" width="13.16" height="13.16" fill="#fde0d4"/>
<rect x="542.9" y="319.8" width="13.16" height="13.16" fill="#fde3d8"/>
<rect x="555.9" y="319.8" width="13.16" height="13.16" fill="#fde3d8"/>
<rect x="243.7" y="332.8" width="13.16" height="13.16" fill="#faeae2"/>
<rect x="295.7" y="332.8" width="13.16" height="13.16" fill="#faeae2"/>
<rect x="321.7" y="332.8" width="13.16" height="13.16" fill="#faeae2"/>
<rect x="347.7" y="332.8" width="13.16" height="13.16" fill="#fdc9b5"/>
<rect x="360.8" y="332.8" width="13.16" height="13.16" fill="#fcbea6"/>
<rect x="373.8" y="332.8" width="13.16" height="13.16" fill="#fcb196"/>
<rect x="386.8" y="332.8" width="13.16" height="13.16" fill="#fcbea6"/>
<rect x="399.8" y="332.8" width="13.16" height="13.16" fill="#fdd4c3"/>
<rect x="412.8" y="332.8" width="13.16" height="13.16" fill="#fed9ca"/>
<rect x="425.8" y="332.8" width="13.16" height="13.16" fill="#fed9ca"/>
<rect x="438.8" y="332.8" width="13.16" height="13.16" fill="#fed9ca"/>
<rect x="451.8" y="332.8" width="13.16" height="13.16" fill="#fed9ca"/>
<rect x="464.8" y="332.8" width="13.16" height="13.16" fill="#feddcf"/>
<rect x="477.8" y="332.8" width="13.16" height="13.16" fill="#feddcf"/>
<rect x="490.9" y="332.8" width="13.16" height="13.16" fill="#feddcf"/>
<rect x="503.9" y="332.8" width="13.16" height="13.16" fill="#feded0"/>
<rect x="516.9" y="332.8" width="13.16" height="13.16" fill="#fedfd2"/>
<rect x="529.9" y="332.8" width="13.16" height="13.16" fill="#fde0d4"/>
<rect x="542.9" y="332.8" width="13.16" height="13.16" fill="#fde3d8"/>
<rect x="555.9" y="332.8" width="13.16" height="13.16" fill="#fde3d8"/>
<rect x="243.7" y="345.8" width="13.16" height="13.16" fill="#faeae2"/>
<rect x="321.7" y="345.8" width="13.16" height="13.16" fill="#faeae2"/>
<rect x="347.7" y="345.8" width="13.16" height="13.16" fill="#fdc9b5"/>
<rect x="360.8" y="345.8" width="13.16" height="13.16" fill="#fcbea6"/>
<rect x="373.8" y="345.8" width="13.16" height="13.16" fill="#fcb297"/>
<rect x="386.8" y="345.8" width="13.16" height="13.16" fill="#fcbea6"/>
<rect x="399.8" y="345.8" width="13.16" height="13.16" fill="#fdd4c3"/>
<rect x="412.8" y="345.8" width="13.16" height="13.16" fill="#fed9ca"/>
<rect x="425.8" y="345.8" width="13.16" height="13.16" fill="#fed9ca"/>
<rect x="438.8" y="345.8" width="13.16" height="13.16" fill="#fed9ca"/>
<rect x="451.8" y="345.8" width="13.16" height="13.16" fill="#fed9ca"/>
<rect x="464.8" y="345.8" width="13.16" height="13.16" fill="#feddcf"/>
<rect x="477.8" y="345.8" width="13.16" height="13.16" fill="#feddcf"/>
<rect x="490.9" y="345.8" width="13.16" height="13.16" fill="#feddcf"/>
<rect x="503.9" y="345.8" width="13.16" height="13.16" fill="#feded0"/>
<rect x="516.9" y="345.8" width="13.16" height="13.16" fill="#fedfd2"/>
<rect x="529.9" y="345.8" width="13.16" height="13.16" fill="#fde0d4"/>
<rect x="542.9" y="345.8" width="13.16" height="13.16" fill="#fde3d8"/>
<rect x="555.9" y="345.8" width="13.16" height="13.16" fill="#fde3d8"/>
<rect x="243.7" y="358.8" width="13.16" height="13.16" fill="#faeae2"/>
<rect x="321.7" y="358.8" width="13.16" height="13.16" fill="#faeae2"/>
<rect x="347.7" y="358.8" width="13.16" height="13.16" fill="#fdc9b5"/>
<rect x="360.8" y="358.8" width="13.16" height="13.16" fill="#fcbfa7"/>
<rect x="373.8" y="358.8" width="13.16" height="13.16" fill="#fcb297"/>
<rect x="386.8" y="358.8" width="13.16" height="13.16" fill="#fcbfa7"/>
<rect x="399.8" y="358.8" width="13.16" height="13.16" fill="#fdd4c3"/>
<rect x="412.8" y="358.8" width="13.16" height="13.16" fill="#fed9ca"/>
<rect x="425.8" y="358.8" width="13.16" height="13.16" fill="#fed9ca"/>
<rect x="438.8" y="358.8" width="13.16" height="13.16" fill="#fed9ca"/>
<rect x="451.8" y="358.8" width="13.16" height="13.16" fill="#fed9ca"/>
<rect x="464.8" y="358.8" width="13.16" height="13.16" fill="#feddcf"/>
<rect x="477.8" y="358.8" width="13.16" height="13.16" fill="#feddcf"/>
<rect x="490.9" y="358.8" width="13.16" height="13.16" fill="#feddcf"/>
<rect x="503.9" y="358.8" width="13.16" height="13.16" fill="#feded0"/>
<rect x="516.9" y="358.8" width="13.16" height="13.16" fill="#fedfd2"/>
<rect x="529.9" y="358.8" width="13.16" height="13.16" fill="#fde0d4"/>
<rect x="542.9" y="358.8" width="13.16" height="13.16" fill="#fde3d8"/>
<rect x="555.9" y="358.8" width="13.16" height="13.16" fill="#fde3d8"/>
<rect x="568.9" y="358.8" width="13.16" height="13.16" fill="#f9ebe4"/>
<rect x="321.7" y="371.8" width="13.16" height="13.16" fill="#faeae2"/>
<rect x="347.7" y="371.8" width="13.16" height="13.16" fill="#fdd1bf"/>
<rect x="360.8" y="371.8" width="13.16" height="13.16" fill="#fdc9b5"/>
<rect x="373.8" y="371.8" width="13.16" height="13.16" fill="#fcbfa7"/>
<rect x="386.8" y="371.8" width="13.16" height="13.16" fill="#fdcebc"/>
<rect x="399.8" y="371.8" width="13.16" height="13.16" fill="#fdd4c3"/>
<rect x="412.8" y="371.8" width="13.16" height="13.16" fill="#fed9ca"/>
<rect x="425.8" y="371.8" width="13.16" height="13.16" fill="#fed9ca"/>
<rect x="438.8" y="371.8" width="13.16" height="13.16" fill="#fed9ca"/>
<rect x="451.8" y="371.8" width="13.16" height="13.16" fill="#fed9ca"/>
<rect x="464.8" y="371.8" width="13.16" height="13.16" fill="#feddcf"/>
<rect x="477.8" y="371.8" width="13.16" height="13.16" fill="#feddcf"/>
<rect x="490.9" y="371.8" width="13.16" height="13.16" fill="#feddcf"/>
<rect x="503.9" y="371.8" width="13.16" height="13.16" fill="#feded0"/>
<rect x="516.9" y="371.8" width="13.16" height="13.16" fill="#fedfd2"/>
<rect x="529.9" y="371.8" width="13.16" height="13.16" fill="#fde0d4"/>
<rect x="542.9" y="371.8" width="13.16" height="13.16" fill="#fde3d8"/>
<rect x="555.9" y="371.8" width="13.16" height="13.16" fill="#fde3d8"/>
<rect x="568.9" y="371.8" width="13.16" height="13.16" fill="#f9ebe4"/>
<rect x="321.7" y="384.9" width="13.16" height="13.16" fill="#faeae2"/>
<rect x="347.7" y="384.9" width="13.16" height="13.16" fill="#fed5c4"/>
<rect x="360.8" y="384.9" width="13.16" height="13.16" fill="#fdd1bf"/>
<rect x="373.8" y="384.9" width="13.16" height="13.16" fill="#fcc4ae"/>
<rect x="386.8" y="384.9" width="13.16" height="13.16" fill="#fdd4c3"/>
<rect x="399.8" y="384.9" width="13.16" height="13.16" fill="#fde0d4"/>
<rect x="412.8" y="384.9" width="13.16" height="13.16" fill="#fed9ca"/>
<rect x="425.8" y="384.9" width="13.16" height="13.16" fill="#fed9ca"/>
<rect x="438.8" y="384.9" width="13.16" height="13.16" fill="#fed9ca"/>
<rect x="451.8" y="384.9" width="13.16" height="13.16" fill="#fed9ca"/>
<rect x="464.8" y="384.9" width="13.16" height="13.16" fill="#feddcf"/>
<rect x="477.8" y="384.9" width="13.16" height="13.16" fill="#feddcf"/>
<rect x="490.9" y="384.9" width="13.16" height="13.16" fill="#feddcf"/>
<rect x="503.9" y="384.9" width="13.16" height="13.16" fill="#feded0"/>
<rect x="516.9" y="384.9" width="13.16" height="13.16" fill="#fedfd2"/>
<rect x="529.9" y="384.9" width="13.16" height="13.16" fill="#fde0d4"/>
<rect x="542.9" y="384.9" width="13.16" height="13.16" fill="#fde3d8"/>
<rect x="555.9" y="384.9" width="13.16" height="13.16" fill="#fde3d8"/>
<rect x="568.9" y="384.9" width="13.16" height="13.16" fill="#f9ebe4"/>
<rect x="347.7" y="397.9" width="13.16" height="13.16" fill="#fed9ca"/>
<rect x="360.8" y="397.9" width="13.16" height="13.16" fill="#fed9ca"/>
<rect x="373.8" y="397.9" width="13.16" height="13.16" fill="#fdcebc"/>
<rect x="386.8" y="397.9" width="13.16" height="13.16" fill="#fed9ca"/>
<rect x="399.8" y="397.9" width="13.16" height="13.16" fill="#fde1d4"/>
<rect x="412.8" y="397.9" width="13.16" height="13.16" fill="#fed9ca"/>
<rect x="425.8" y="397.9" width="13.16" height="13.16" fill="#fed9ca"/>
<rect x="438.8" y="397.9" width="13.16" height="13.16" fill="#fed9ca"/>
<rect x="451.8" y="397.9" width="13.16" height="13.16" fill="#fed9ca"/>
<rect x="464.8" y="397.9" width="13.16" height="13.16" fill="#feddcf"/>
<rect x="477.8" y="397.9" width="13.16" height="13.16" fill="#feddcf"/>
<rect x="490.9" y="397.9" width="13.16" height="13.16" fill="#feddcf"/>
<rect x="503.9" y="397.9" width="13.16" height="13.16" fill="#feded0"/>
<rect x="516.9" y="397.9" width="13.16" height="13.16" fill="#fedfd2"/>
<rect x="529.9" y="397.9" width="13.16" height="13.16" fill="#fde0d4"/>
<rect x="542.9" y="397.9" width="13.16" height="13.16" fill="#fde3d8"/>
<rect x="555.9" y="397.9" width="13.16" height="13.16" fill="#fde3d8"/>
<rect x="568.9" y="397.9" width="13.16" height="13.16" fill="#f9ebe4"/>
<rect x="347.7" y="410.9" width="13.16" height="13.16" fill="#feded0"/>
<rect x="360.8" y="410.9" width="13.16" height="13.16" fill="#feded0"/>
<rect x="373.8" y="410.9" width="13.16" height="13.16" fill="#fedccd"/>
<rect x="386.8" y="410.9" width="13.16" height="13.16" fill="#feded0"/>
<rect x="399.8" y="410.9" width="13.16" height="13.16" fill="#fde1d4"/>
<rect x="412.8" y="410.9" width="13.16" height="13.16" fill="#fde2d6"/>
<rect x="425.8" y="410.9" width="13.16" height="13.16" fill="#fde2d6"/>
<rect x="438.8" y="410.9" width="13.16" height="13.16" fill="#fde2d6"/>
<rect x="451.8" y="410.9" width="13.16" height="13.16" fill="#fde2d6"/>
<rect x="464.8" y="410.9" width="13.16" height="13.16" fill="#fde2d6"/>
<rect x="477.8" y="410.9" width="13.16" height="13.16" fill="#fde2d6"/>
<rect x="490.9" y="410.9" width="13.16" height="13.16" fill="#fde2d6"/>
<rect x="503.9" y="410.9" width="13.16" height="13.16" fill="#fde2d6"/>
<rect x="516.9" y="410.9" width="13.16" height="13.16" fill="#fedfd2"/>
<rect x="529.9" y="410.9" width="13.16" height="13.16" fill="#fde0d4"/>
<rect x="542.9" y="410.9" width="13.16" height="13.16" fill="#fde3d8"/>
<rect x="555.9" y="410.9" width="13.16" height="13.16" fill="#fde3d8"/>
<rect x="568.9" y="410.9" width="13.16" height="13.16" fill="#f9ebe4"/>
<rect x="347.7" y="423.9" width="13.16" height="13.16" fill="#feded0"/>
<rect x="360.8" y="423.9" width="13.16" height="13.16" fill="#feded0"/>
<rect x="373.8" y="423.9" width="13.16" height="13.16" fill="#fedcce"/>
<rect x="386.8" y="423.9" width="13.16" height="13.16" fill="#feded0"/>
<rect x="399.8" y="423.9" width="13.16" height="13.16" fill="#fde1d5"/>
<rect x="412.8" y="423.9" width="13.16" height="13.16" fill="#fde2d6"/>
<rect x="425.8" y="423.9" width="13.16" height="13.16" fill="#fde2d6"/>
<rect x="438.8" y="423.9" width="13.16" height="13.16" fill="#fde2d6"/>
<rect x="451.8" y="423.9" width="13.16" height="13.16" fill="#fde2d6"/>
<rect x="464.8" y="423.9" width="13.16" height="13.16" fill="#fde2d6"/>
<rect x="477.8" y="423.9" width="13.16" height="13.16" fill="#fde2d6"/>
<rect x="490.9" y="423.9" width="13.16" height="13.16" fill="#fde2d6"/>
<rect x="503.9" y="423.9" width="13.16" height="13.16" fill="#fde2d6"/>
<rect x="568.9" y="423.9" width="13.16" height="13.16" fill="#f9ebe4"/>
<rect x="347.7" y="436.9" width="13.16" height="13.16" fill="#feded0"/>
<rect x="360.8" y="436.9" width="13.16" height="13.16" fill="#feded0"/>
<rect x="373.8" y="436.9" width="13.16" height="13.16" fill="#fedcce"/>
<rect x="386.8" y="436.9" width="13.16" height="13.16" fill="#feded0"/>
<rect x="399.8" y="436.9" width="13.16" height="13.16" fill="#fde1d5"/>
<rect x="412.8" y="436.9" width="13.16" height="13.16" fill="#fde2d6"/>
<rect x="425.8" y="436.9" width="13.16" height="13.16" fill="#fde2d6"/>
<rect x="438.8" y="436.9" width="13.16" height="13.16" fill="#fde2d6"/>
<rect x="451.8" y="436.9" width="13.16" height="13.16" fill="#fde2d6"/>
<rect x="464.8" y="436.9" width="13.16" height="13.16" fill="#fde2d6"/>
<rect x="477.8" y="436.9" width="13.16" height="13.16" fill="#fde2d6"/>
<rect x="490.9" y="436.9" width="13.16" height="13.16" fill="#fde2d6"/>
<rect x="503.9" y="436.9" width="13.16" height="13.16" fill="#fde2d6"/>
<rect x="568.9" y="436.9" width="13.16" height="13.16" fill="#f9ebe4"/>
<rect x="347.7" y="449.9" width="13.16" height="13.16" fill="#feded0"/>
<rect x="360.8" y="449.9" width="13.16" height="13.16" fill="#feded0"/>
<rect x="373.8" y="449.9" width="13.16" height="13.16" fill="#feddcf"/>
<rect x="386.8" y="449.9" width="13.16" height="13.16" fill="#feded0"/>
<rect x="399.8" y="449.9" width="13.16" height="13.16" fill="#fde1d5"/>
<rect x="412.8" y="449.9" width="13.16" height="13.16" fill="#fde2d6"/>
<rect x="425.8" y="449.9" width="13.16" height="13.16" fill="#fde2d6"/>
<rect x="438.8" y="449.9" width="13.16" height="13.16" fill="#fde2d6"/>
<rect x="451.8" y="449.9" width="13.16" height="13.16" fill="#fde2d6"/>
<rect x="464.8" y="449.9" width="13.16" height="13.16" fill="#fde2d6"/>
<rect x="477.8" y="449.9" width="13.16" height="13.16" fill="#fde2d6"/>
<rect x="490.9" y="449.9" width="13.16" height="13.16" fill="#fde2d6"/>
<rect x="503.9" y="449.9" width="13.16" height="13.16" fill="#fde2d6"/>
<rect x="347.7" y="462.9" width="13.16" height="13.16" fill="#feded0"/>
<rect x="360.8" y="462.9" width="13.16" height="13.16" fill="#feded0"/>
<rect x="373.8" y="462.9" width="13.16" height="13.16" fill="#feddcf"/>
<rect x="386.8" y="462.9" width="13.16" height="13.16" fill="#feded0"/>
<rect x="399.8" y="462.9" width="13.16" height="13.16" fill="#fde1d5"/>
<rect x="412.8" y="462.9" width="13.16" height="13.16" fill="#fde2d6"/>
<rect x="425.8" y="462.9" width="13.16" height="13.16" fill="#fde2d6"/>
<rect x="438.8" y="462.9" width="13.16" height="13.16" fill="#fde2d6"/>
<rect x="451.8" y="462.9" width="13.16" height="13.16" fill="#fde2d6"/>
<rect x="464.8" y="462.9" width="13.16" height="13.16" fill="#fde2d6"/>
<rect x="477.8" y="462.9" width="13.16" height="13.16" fill="#fde2d6"/>
<rect x="490.9" y="462.9" width="13.16" height="13.16" fill="#fde2d6"/>
<rect x="503.9" y="462.9" width="13.16" height="13.16" fill="#fde2d6"/>
<rect x="347.7" y="475.9" width="13.16" height="13.16" fill="#feded1"/>
<rect x="360.8" y="475.9" width="13.16" height="13.16" fill="#feded1"/>
<rect x="373.8" y="475.9" width="13.16" height="13.16" fill="#feddcf"/>
<rect x="386.8" y="475.9" width="13.16" height="13.16" fill="#feded1"/>
<rect x="399.8" y="475.9" width="13.16" height="13.16" fill="#fde2d6"/>
<rect x="412.8" y="475.9" width="13.16" height="13.16" fill="#fbe7de"/>
<rect x="425.8" y="475.9" width="13.16" height="13.16" fill="#fbe7de"/>
<rect x="438.8" y="475.9" width="13.16" height="13.16" fill="#fbe7de"/>
<rect x="451.8" y="475.9" width="13.16" height="13.16" fill="#fbe7de"/>
<rect x="464.8" y="475.9" width="13.16" height="13.16" fill="#fbe7de"/>
<rect x="477.8" y="475.9" width="13.16" height="13.16" fill="#fbe7de"/>
<rect x="490.9" y="475.9" width="13.16" height="13.16" fill="#fbe7de"/>
<rect x="503.9" y="475.9" width="13.16" height="13.16" fill="#fbe7de"/>
<rect x="347.7" y="488.9" width="13.16" height="13.16" fill="#feded1"/>
<rect x="360.8" y="488.9" width="13.16" height="13.16" fill="#feded1"/>
<rect x="373.8" y="488.9" width="13.16" height="13.16" fill="#feddd0"/>
<rect x="386.8" y="488.9" width="13.16" height="13.16" fill="#feded1"/>
<rect x="399.8" y="488.9" width="13.16" height="13.16" fill="#fde2d6"/>
<rect x="412.8" y="488.9" width="13.16" height="13.16" fill="#fbe7de"/>
<rect x="425.8" y="488.9" width="13.16" height="13.16" fill="#fbe7de"/>
<rect x="438.8" y="488.9" width="13.16" height="13.16" fill="#fbe7de"/>
<rect x="451.8" y="488.9" width="13.16" height="13.16" fill="#fbe7de"/>
<rect x="464.8" y="488.9" width="13.16" height="13.16" fill="#fbe7de"/>
<rect x="477.8" y="488.9" width="13.16" height="13.16" fill="#fbe7de"/>
<rect x="490.9" y="488.9" width="13.16" height="13.16" fill="#fbe7de"/>
<rect x="503.9" y="488.9" width="13.16" height="13.16" fill="#fbe7de"/>
<rect x="347.7" y="501.9" width="13.16" height="13.16" fill="#feded1"/>
<rect x="360.8" y="501.9" width="13.16" height="13.16" fill="#feded1"/>
<rect x="373.8" y="501.9" width="13.16" height="13.16" fill="#feded0"/>
<rect x="386.8" y="501.9" width="13.16" height="13.16" fill="#feded1"/>
<rect x="399.8" y="501.9" width="13.16" height="13.16" fill="#fde2d6"/>
<rect x="412.8" y="501.9" width="13.16" height="13.16" fill="#fbe7de"/>
<rect x="425.8" y="501.9" width="13.16" height="13.16" fill="#fbe7de"/>
<rect x="438.8" y="501.9" width="13.16" height="13.16" fill="#fbe7de"/>
<rect x="451.8" y="501.9" width="13.16" height="13.16" fill="#fbe7de"/>
<rect x="464.8" y="501.9" width="13.16" height="13.16" fill="#fbe7de"/>
<rect x="477.8" y="501.9" width="13.16" height="13.16" fill="#fbe7de"/>
<rect x="490.9" y="501.9" width="13.16" height="13.16" fill="#fbe7de"/>
<rect x="503.9" y="501.9" width="13.16" height="13.16" fill="#fbe7de"/>
<rect x="347.7" y="514.9" width="13.16" height="13.16" fill="#feded1"/>
<rect x="360.8" y="514.9" width="13.16" height="13.16" fill="#feded1"/>
<rect x="373.8" y="514.9" width="13.16" height="13.16" fill="#feded0"/>
<rect x="386.8" y="514.9" width="13.16" height="13.16" fill="#feded1"/>
<rect x="399.8" y="514.9" width="13.16" height="13.16" fill="#fde2d6"/>
<rect x="412.8" y="514.9" width="13.16" height="13.16" fill="#fbe7de"/>
<rect x="425.8" y="514.9" width="13.16" height="13.16" fill="#fbe7de"/>
<rect x="438.8" y="514.9" width="13.16" height="13.16" fill="#fbe7de"/>
<rect x="451.8" y="514.9" width="13.16" height="13.16" fill="#fbe7de"/>
<rect x="464.8" y="514.9" width="13.16" height="13.16" fill="#fbe7de"/>
<rect x="477.8" y="514.9" width="13.16" height="13.16" fill="#fbe7de"/>
<rect x="490.9" y="514.9" width="13.16" height="13.16" fill="#fbe7de"/>
<rect x="503.9" y="514.9" width="13.16" height="13.16" fill="#fbe7de"/>
<rect x="347.7" y="528.0" width="13.16" height="13.16" fill="#feded1"/>
<rect x="360.8" y="528.0" width="13.16" height="13.16" fill="#feded1"/>
<rect x="373.8" y="528.0" width="13.16" height="13.16" fill="#feded0"/>
<rect x="386.8" y="528.0" width="13.16" height="13.16" fill="#feded1"/>
<rect x="399.8" y="528.0" width="13.16" height="13.16" fill="#fde2d6"/>
<rect x="412.8" y="528.0" width="13.16" height="13.16" fill="#fbe7de"/>
<rect x="425.8" y="528.0" width="13.16" height="13.16" fill="#fbe7de"/>
<rect x="438.8" y="528.0" width="13.16" height="13.16" fill="#fbe7de"/>
<rect x="451.8" y="528.0" width="13.16" height="13.16" fill="#fbe7de"/>
<rect x="464.8" y="528.0" width="13.16" height="13.16" fill="#fbe7de"/>
<rect x="477.8" y="528.0" width="13.16" height="13.16" fill="#fbe7de"/>
<rect x="490.9" y="528.0" width="13.16" height="13.16" fill="#fbe7de"/>
<rect x="503.9" y="528.0" width="13.16" height="13.16" fill="#fbe7de"/>
<rect x="347.7" y="541.0" width="13.16" height="13.16" fill="#fedfd1"/>
<rect x="360.8" y="541.0" width="13.16" height="13.16" fill="#fedfd1"/>
<rect x="373.8" y="541.0" width="13.16" height="13.16" fill="#feded0"/>
<rect x="386.8" y="541.0" width="13.16" height="13.16" fill="#fedfd1"/>
<rect x="399.8" y="541.0" width="13.16" height="13.16" fill="#fde2d7"/>
<rect x="412.8" y="541.0" width="13.16" height="13.16" fill="#fbe7de"/>
<rect x="425.8" y="541.0" width="13.16" height="13.16" fill="#fbe7de"/>
<rect x="438.8" y="541.0" width="13.16" height="13.16" fill="#fbe7de"/>
<rect x="451.8" y="541.0" width="13.16" height="13.16" fill="#fbe7de"/>
<rect x="464.8" y="541.0" width="13.16" height="13.16" fill="#fbe7de"/>
<rect x="477.8" y="541.0" width="13.16" height="13.16" fill="#fbe7de"/>
<rect x="490.9" y="541.0" width="13.16" height="13.16" fill="#fbe7de"/>
<rect x="503.9" y="541.0" width="13.16" height="13.16" fill="#fbe7de"/>
<rect x="347.7" y="554.0" width="13.16" height="13.16" fill="#fedfd1"/>
<rect x="360.8" y="554.0" width="13.16" height="13.16" fill="#fedfd1"/>
<rect x="373.8" y="554.0" width="13.16" height="13.16" fill="#feded1"/>
<rect x="386.8" y="554.0" width="13.16" height="13.16" fill="#fedfd1"/>
<rect x="399.8" y="554.0" width="13.16" height="13.16" fill="#fde2d7"/>
<rect x="412.8" y="554.0" width="13.16" height="13.16" fill="#fbe7de"/>
<rect x="425.8" y="554.0" width="13.16" height="13.16" fill="#fbe7de"/>
<rect x="438.8" y="554.0" width="13.16" height="13.16" fill="#fbe7de"/>
<rect x="451.8" y="554.0" width="13.16" height="13.16" fill="#fbe7de"/>
<rect x="464.8" y="554.0" width="13.16" height="13.16" fill="#fbe7de"/>
<rect x="477.8" y="554.0" width="13.16" height="13.16" fill="#fbe7de"/>
<rect x="490.9" y="554.0" width="13.16" height="13.16" fill="#fbe7de"/>
<rect x="503.9" y="554.0" width="13.16" height="13.16" fill="#fbe7de"/>
<rect x="347.7" y="567.0" width="13.16" height="13.16" fill="#fedfd2"/>
<rect x="360.8" y="567.0" width="13.16" height="13.16" fill="#fedfd2"/>
<rect x="373.8" y="567.0" width="13.16" height="13.16" fill="#feded1"/>
<rect x="386.8" y="567.0" width="13.16" height="13.16" fill="#fedfd2"/>
<rect x="438.8" y="567.0" width="13.16" height="13.16" fill="#fbe7de"/>
<rect x="477.8" y="567.0" width="13.16" height="13.16" fill="#fbe7de"/>
<rect x="503.9" y="567.0" width="13.16" height="13.16" fill="#fbe7de"/>
<rect x="347.7" y="580.0" width="13.16" height="13.16" fill="#fedfd2"/>
<rect x="360.8" y="580.0" width="13.16" height="13.16" fill="#fedfd2"/>
<rect x="373.8" y="580.0" width="13.16" height="13.16" fill="#fedfd1"/>
<rect x="386.8" y="580.0" width="13.16" height="13.16" fill="#fedfd2"/>
<rect x="438.8" y="580.0" width="13.16" height="13.16" fill="#fbe7de"/>
<rect x="477.8" y="580.0" width="13.16" height="13.16" fill="#fbe7de"/>
<rect x="503.9" y="580.0" width="13.16" height="13.16" fill="#fbe7de"/>
<rect x="347.7" y="593.0" width="13.16" height="13.16" fill="#fedfd2"/>
<rect x="360.8" y="593.0" width="13.16" height="13.16" fill="#fedfd2"/>
<rect x="373.8" y="593.0" width="13.16" height="13.16" fill="#fedfd2"/>
<rect x="386.8" y="593.0" width="13.16" height="13.16" fill="#fedfd2"/>
<rect x="438.8" y="593.0" width="13.16" height="13.16" fill="#fbe7de"/>
<rect x="477.8" y="593.0" width="13.16" height="13.16" fill="#fbe7de"/>
<rect x="503.9" y="593.0" width="13.16" height="13.16" fill="#fbe7de"/>
<rect x="347.7" y="606.0" width="13.16" height="13.16" fill="#fedfd2"/>
<rect x="360.8" y="606.0" width="13.16" height="13.16" fill="#fedfd2"/>
<rect x="373.8" y="606.0" width="13.16" height="13.16" fill="#fedfd2"/>
<rect x="386.8" y="606.0" width="13.16" height="13.16" fill="#fedfd2"/>
<rect x="438.8" y="606.0" width="13.16" height="13.16" fill="#fbe7de"/>
<rect x="477.8" y="606.0" width="13.16" height="13.16" fill="#fbe7de"/>
<rect x="503.9" y="606.0" width="13.16" height="13.16" fill="#fbe7de"/></g>
<g opacity="0.75"><polygon points="530.0,409.6 565.4,407.1 567.6,436.0 532.9,438.6" fill="#bcaeb0"/>
<polygon points="426.7,507.4 468.6,503.6 470.5,529.3 473.7,529.3 476.0,548.6 434.8,554.1 433.5,542.2 430.9,542.2" fill="#bcaeb0"/></g>
<g><text transform="translate(233.5,160.5) rotate(17)" font-family="DejaVu Sans, sans-serif" font-style="oblique" font-size="12" fill="#3a3a3a">502</text>
<text transform="translate(12.5,75) rotate(45)" font-family="DejaVu Sans, sans-serif" font-style="oblique" font-size="12" fill="#222">502</text>
<text transform="translate(210,452.5) rotate(3)" font-family="DejaVu Sans, sans-serif" font-size="11" fill="#222">Via Romana</text>
<text transform="translate(693.5,466.5) rotate(-4.5)" font-family="DejaVu Sans, sans-serif" font-size="11" fill="#222">Via Romana</text>
<text transform="translate(604,386.6) rotate(1)" font-family="DejaVu Sans, sans-serif" font-size="10.6" fill="#222">Via Pineta</text>
<text x="511" y="531.5" font-family="DejaVu Sans, sans-serif" font-size="11.5" fill="#a0a0a0">Cucco</text></g>
<g><polygon points="294.0,414.6 310.0,414.6 310.0,430.4 294.0,430.4" fill="#fd9a0f" stroke="#3a2606" stroke-width="1.7" stroke-linejoin="round"/>
<polygon points="310.0,414.6 331.2,414.6 331.2,441.0 310.0,441.0" fill="#fd9a0f" stroke="#3a2606" stroke-width="1.7" stroke-linejoin="round"/>
<polygon points="226.8,474.4 251.4,470.9 256.7,501.8 232.8,506.0" fill="#fd9a0f" stroke="#3a2606" stroke-width="1.7" stroke-linejoin="round"/>
<polygon points="280.6,470.2 289.4,470.2 289.4,479.7 280.6,479.7" fill="#fd9a0f" stroke="#3a2606" stroke-width="1.7" stroke-linejoin="round"/>
<polygon points="291.1,484.2 296.4,484.2 296.4,495.5 291.1,495.5" fill="#fd9a0f" stroke="#3a2606" stroke-width="1.7" stroke-linejoin="round"/>
<polygon points="318.2,475.1 346.3,484.2 340.4,507.8 314.0,499.0 316.5,489.5 315.0,489.0" fill="#fd9a0f" stroke="#3a2606" stroke-width="1.7" stroke-linejoin="round"/>
<polygon points="791.2,474.6 824.2,482.5 817.5,510.0 783.7,501.6" fill="#fd9a0f" stroke="#3a2606" stroke-width="1.7" stroke-linejoin="round"/>
<polygon points="883.0,522.5 915.2,529.2 908.7,557.6 876.0,550.6" fill="#fd9a0f" stroke="#3a2606" stroke-width="1.7" stroke-linejoin="round"/>
<polygon points="578.3,330.0 615.0,330.0 616.4,353.2 581.2,356.6" fill="#fd9a0f" stroke="#3a2606" stroke-width="1.7" stroke-linejoin="round"/>
<polygon points="644.9,330.0 676.8,336.8 689.7,347.0 688.9,360.3 642.0,355.1" fill="#fd9a0f" stroke="#3a2606" stroke-width="1.7" stroke-linejoin="round"/>
<polygon points="590.5,397.6 619.8,394.7 624.7,435.2 594.7,439.0" fill="#fd9a0f" stroke="#3a2606" stroke-width="1.7" stroke-linejoin="round"/>
<polygon points="662.3,405.3 698.0,401.0 699.0,410.1 705.1,409.5 706.7,426.5 701.9,427.5 702.4,433.3 667.1,438.5" fill="#fd9a0f" stroke="#3a2606" stroke-width="1.7" stroke-linejoin="round"/>
<polygon points="572.0,413.4 575.8,414.0 577.0,430.4 573.1,431.3" fill="#fd9a0f" stroke="#3a2606" stroke-width="1.7" stroke-linejoin="round"/>
<polygon points="572.6,490.4 589.5,489.3 590.6,507.3 573.8,509.1" fill="#fd9a0f" stroke="#3a2606" stroke-width="1.7" stroke-linejoin="round"/>
<polygon points="614.3,483.6 649.8,482.5 651.8,519.0 617.2,523.0" fill="#fd9a0f" stroke="#3a2606" stroke-width="1.7" stroke-linejoin="round"/>
<polygon points="601.2,540.6 609.3,539.9 610.4,557.9 602.3,558.6" fill="#fd9a0f" stroke="#3a2606" stroke-width="1.7" stroke-linejoin="round"/>
<polygon points="567.5,557.9 599.0,555.6 600.8,588.3 569.3,590.5" fill="#fd9a0f" stroke="#3a2606" stroke-width="1.7" stroke-linejoin="round"/>
<polygon points="551.3,572.5 561.4,571.4 562.5,582.6 552.4,583.8" fill="#fd9a0f" stroke="#3a2606" stroke-width="1.7" stroke-linejoin="round"/>
<polygon points="623.3,551.1 664.9,547.8 667.1,583.3 625.1,586.5" fill="#fd9a0f" stroke="#3a2606" stroke-width="1.7" stroke-linejoin="round"/>
<polygon points="673.5,479.1 703.9,476.9 705.7,506.8 671.2,509.0 670.6,493.7 673.0,493.3" fill="#fd9a0f" stroke="#3a2606" stroke-width="1.7" stroke-linejoin="round"/>
<polygon points="759.7,476.9 765.3,476.4 766.2,493.3 760.5,494.2" fill="#fd9a0f" stroke="#3a2606" stroke-width="1.7" stroke-linejoin="round"/>
<polygon points="723.7,475.3 759.7,471.7 761.7,503.9 726.4,507.7" fill="#fd9a0f" stroke="#3a2606" stroke-width="1.7" stroke-linejoin="round"/>
<polygon points="698.2,530.2 724.8,527.9 727.0,554.5 700.5,557.2" fill="#fd9a0f" stroke="#3a2606" stroke-width="1.7" stroke-linejoin="round"/></g>
<g><polygon points="394.9,304.8 560.7,252.4 573.3,451.8 495.8,468.5 499.8,565.7 403.2,569.6" fill="#0000ff" fill-opacity="0.4" stroke="#0000ee" stroke-width="2.2" stroke-linejoin="round"/>
<polygon points="449.3,347.1 488.4,344.2 490.7,369.3 451.6,373.1" fill="#9a5e62" stroke="#2f1a66" stroke-width="1.6" stroke-linejoin="round"/>
<polygon points="413.8,420.6 436.3,419.0 438.9,448.9 416.3,451.1" fill="#9a5e62" stroke="#2f1a66" stroke-width="1.6" stroke-linejoin="round"/>
<polygon points="463.0,418.3 498.4,416.4 500.6,447.3 466.2,449.5" fill="#9a5e62" stroke="#2f1a66" stroke-width="1.6" stroke-linejoin="round"/>
<polygon points="522.5,405.4 557.9,402.9 560.1,431.8 525.4,434.4" fill="#9a5e62" stroke="#2f1a66" stroke-width="1.6" stroke-linejoin="round"/>
<polygon points="419.2,503.2 461.1,499.4 463.0,525.1 466.2,525.1 468.5,544.4 427.3,549.9 426.0,538.0 423.4,538.0" fill="#9a5e62" stroke="#2f1a66" stroke-width="1.6" stroke-linejoin="round"/>
<polygon points="532.0,340.0 550.5,349.9 542.0,365.8 523.5,355.9" fill="#9a5e62" stroke="#2f1a66" stroke-width="1.6" stroke-linejoin="round"/>
<polygon points="525.8,322.2 544.8,331.1 537.4,347.0 518.4,338.1" fill="#9a5e62" stroke="#2f1a66" stroke-width="1.6" stroke-linejoin="round"/>
<polygon points="519.5,305.2 539.0,313.0 532.5,329.2 513.0,321.4" fill="#9a5e62" stroke="#2f1a66" stroke-width="1.6" stroke-linejoin="round"/>
<polygon points="511.8,286.8 532.8,293.6 527.4,310.2 506.4,303.4" fill="#9a5e62" stroke="#2f1a66" stroke-width="1.6" stroke-linejoin="round"/>
<rect x="474.3" y="275.1" width="7" height="7" fill="#ffffff" fill-opacity="0.35" stroke="#888" stroke-opacity="0.5" stroke-width="0.8"/>
<rect x="563.5" y="348.6" width="7" height="7" fill="#ffffff" fill-opacity="0.35" stroke="#888" stroke-opacity="0.5" stroke-width="0.8"/>
<rect x="531.0" y="456.6" width="7" height="7" fill="#ffffff" fill-opacity="0.35" stroke="#888" stroke-opacity="0.5" stroke-width="0.8"/>
<rect x="494.3" y="513.6" width="7" height="7" fill="#ffffff" fill-opacity="0.35" stroke="#888" stroke-opacity="0.5" stroke-width="0.8"/>
<rect x="448.0" y="564.2" width="7" height="7" fill="#ffffff" fill-opacity="0.35" stroke="#888" stroke-opacity="0.5" stroke-width="0.8"/>
<rect x="395.5" y="433.7" width="7" height="7" fill="#ffffff" fill-opacity="0.35" stroke="#888" stroke-opacity="0.5" stroke-width="0.8"/>
<rect x="390.9" y="300.8" width="8" height="8" fill="#ffffff" stroke="#333" stroke-width="1"/>
<rect x="556.7" y="248.4" width="8" height="8" fill="#ffffff" stroke="#333" stroke-width="1"/>
<rect x="569.3" y="447.8" width="8" height="8" fill="#ffffff" stroke="#333" stroke-width="1"/>
<rect x="491.8" y="464.5" width="8" height="8" fill="#ffffff" stroke="#333" stroke-width="1"/>
<rect x="495.8" y="561.7" width="8" height="8" fill="#ffffff" stroke="#333" stroke-width="1"/>
<rect x="399.2" y="565.6" width="8" height="8" fill="#ffffff" stroke="#333" stroke-width="1"/></g>
</svg>
<svg class="abs" style="left:8px;top:34px" width="240" height="28" viewBox="8 34 240 28">
<defs>
<linearGradient id="gA" x1="0" y1="0" x2="0" y2="1"><stop offset="0" stop-color="#a6dc9c"/><stop offset="1" stop-color="#55ad55"/></linearGradient>
<linearGradient id="gB" x1="0" y1="0" x2="0" y2="1"><stop offset="0" stop-color="#cdeec4"/><stop offset="1" stop-color="#93d28d"/></linearGradient>
<radialGradient id="gL" cx="0.4" cy="0.4" r="0.7"><stop offset="0" stop-color="#ffffff"/><stop offset="1" stop-color="#cddcf3"/></radialGradient>
<radialGradient id="gI" cx="0.5" cy="0.4" r="0.6"><stop offset="0" stop-color="#7db3e6"/><stop offset="1" stop-color="#3f78bf"/></radialGradient>
</defs>
<!-- zoom extent: four squares -->
<rect x="12.6" y="39" width="6.8" height="6.8" rx="1.2" fill="#86cf84"/><rect x="22.8" y="39" width="6.8" height="6.8" rx="1.2" fill="#62b968"/>
<rect x="12.6" y="49" width="6.8" height="6.8" rx="1.2" fill="#5cb55f"/><rect x="22.8" y="49" width="6.8" height="6.8" rx="1.2" fill="#45a052"/>
<!-- zoom in -->
<path d="M46.6 49.6 L50.2 53" stroke="#d9a25f" stroke-width="3.2" stroke-linecap="round"/>
<circle cx="42" cy="45.1" r="4.3" fill="url(#gL)" stroke="#b4c5e6" stroke-width="1.1"/>
<path d="M47.8 42.4 v6.6 M44.5 45.7 h6.6" stroke="#3f9a45" stroke-width="2.6"/>
<!-- zoom out -->
<path d="M70.6 49.6 L74.2 53" stroke="#d9a25f" stroke-width="3.2" stroke-linecap="round"/>
<circle cx="66" cy="45.1" r="4.3" fill="url(#gL)" stroke="#b4c5e6" stroke-width="1.1"/>
<rect x="67.6" y="44.2" width="7.4" height="3" rx="0.6" fill="#e8474b"/>
<!-- arrows -->
<path d="M84.3 47.8 L89 43.8 L89 46 L99.3 46 L99.3 49.6 L89 49.6 L89 51.8 Z" fill="url(#gA)" stroke="#5aa85a" stroke-width="0.6"/>
<path d="M122.8 47.8 L118.1 43.8 L118.1 46 L107.8 46 L107.8 49.6 L118.1 49.6 L118.1 51.8 Z" fill="url(#gB)" stroke="#9ccf97" stroke-width="0.6"/>
<!-- ruler / T-square -->
<rect x="130.6" y="41.2" width="16.6" height="3.8" rx="0.8" fill="#f6b27a" stroke="#e58a3d" stroke-width="0.8"/>
<rect x="132.2" y="39.4" width="4" height="15.4" rx="0.8" fill="#f6b27a" stroke="#e58a3d" stroke-width="0.8"/>
<path d="M154.2 46.2 h5.4 l-2.7 3 z" fill="#111"/>
<!-- info -->
<circle cx="177.3" cy="47.5" r="7.3" fill="url(#gI)" stroke="#3a6fb4" stroke-width="0.8"/>
<circle cx="177.3" cy="47.5" r="5.6" fill="none" stroke="#a9cbee" stroke-width="1"/>
<path d="M177.3 45.6 v5" stroke="#fff" stroke-width="1.8"/><circle cx="177.3" cy="43.6" r="1" fill="#fff"/><path d="M175.8 51 h3" stroke="#fff" stroke-width="1"/>
<!-- pencil + add -->
<path d="M195 53.6 L196.6 49.4 L205.4 41.2 L208.4 44.2 L199.4 52.2 Z" fill="#f4cf5a" stroke="#d69a2e" stroke-width="0.8"/>
<path d="M195 53.6 L196.6 49.4 L199.4 52.2 Z" fill="#e9b98a"/><path d="M195 53.6 l0.7 -1.8 l1.2 1.2 z" fill="#555"/>
<path d="M204 42.5 L207 45.5" stroke="#f0a0a0" stroke-width="1.6"/>
<circle cx="206" cy="52.2" r="3.4" fill="#4fa84a"/><circle cx="206" cy="52.2" r="1.5" fill="#d8f0d0"/>
<path d="M212.2 46.2 h5.4 l-2.7 3 z" fill="#111"/>
<!-- map edit -->
<rect x="227.5" y="39.3" width="16" height="16" fill="#e9e38a" stroke="#6f6f6f" stroke-width="1.2"/>
<path d="M228.2 48 L236 40 L243 40 L243 47 L235 55 L228.2 55 Z" fill="#bfe0a0"/>
<path d="M238 40 L243 40 L243 45 Z" fill="#9cc6ee"/>
<path d="M231 40.5 L236 49.5 M243 43 L233 54" stroke="#e27a3a" stroke-width="1.1" fill="none"/>
<path d="M230.8 54 L232.2 50.6 L240.2 43.2 L242.8 45.8 L234.6 53 Z" fill="#f4cf5a" stroke="#d69a2e" stroke-width="0.7"/>
<path d="M230.8 54 L232.2 50.6 L234.6 53 Z" fill="#e9b98a"/>
</svg>

<div id="combo" class="abs">33010 Cucco UD, Italy</div>
<div id="trig" class="abs"><svg width="17" height="18" viewBox="0 0 17 18"><path d="M5 7 L8.5 11 L12 7" fill="none" stroke="#1c3a7a" stroke-width="2.2"/></svg></div>
<svg class="abs" style="left:8px;top:62px" width="70" height="230" viewBox="8 62 70 230">
<defs><linearGradient id="nb" x1="0" y1="0" x2="0" y2="1"><stop offset="0" stop-color="#ffffff"/><stop offset="1" stop-color="#dedede"/></linearGradient>
<linearGradient id="nh" x1="0" y1="0" x2="0" y2="1"><stop offset="0" stop-color="#e6f1fd"/><stop offset="0.5" stop-color="#b9d6f7"/><stop offset="1" stop-color="#d9e9fb"/></linearGradient>
<linearGradient id="nt" x1="0" y1="0" x2="1" y2="0"><stop offset="0" stop-color="#a9a9a9"/><stop offset="0.5" stop-color="#d9d9d9"/><stop offset="1" stop-color="#b9b9b9"/></linearGradient></defs>
<g fill="url(#nb)" stroke="#8a8a8a" stroke-width="1">
<rect x="31" y="73.3" width="14" height="14" rx="2.5"/>
<rect x="15.6" y="90.2" width="14" height="14" rx="2.5"/>
<rect x="45" y="90.2" width="14" height="14" rx="2.5"/>
<rect x="31" y="107.3" width="14" height="14" rx="2.5"/>
<rect x="30.2" y="137.5" width="14.6" height="14.2" rx="2.5"/>
<rect x="30.2" y="266.8" width="14.6" height="14.2" rx="2.5"/>
</g>
<g fill="#222">
<path d="M34.6 82.3 h6.8 l-3.4 -4 z"/>
<path d="M24.6 93.8 v6.8 l-4 -3.4 z"/>
<path d="M50 93.8 v6.8 l4 -3.4 z"/>
<path d="M34.6 112.4 h6.8 l-3.4 4 z"/>
</g>
<path d="M37.5 141 v7.4 M33.8 144.7 h7.4" stroke="#222" stroke-width="1.5"/>
<path d="M33.8 273.9 h7.4" stroke="#222" stroke-width="1.5"/>
<rect x="34.4" y="157" width="6.2" height="104.5" rx="3" fill="url(#nt)" stroke="#9a9a9a" stroke-width="0.6"/>
<rect x="29" y="162.2" width="15.2" height="14.2" rx="3" fill="url(#nh)" stroke="#7fb0ea" stroke-width="1"/>
<path d="M33 169.3 h7.2" stroke="#5a8fd0" stroke-width="1.4"/>
</svg>

<div id="dlg" class="abs">
 <div class="abs tool" style="left:171px;top:5px"><svg style="display:block" width="12" height="12" viewBox="0 0 12 12"><path d="M2.4 7.6 L6 3.6 L9.6 7.6 Z" fill="#243f9c"/></svg></div>
 <div class="abs tool" style="left:189px;top:5px"><svg style="display:block" width="12" height="12" viewBox="0 0 12 12"><path d="M1.8 1.8 L10.2 10.2 M10.2 1.8 L1.8 10.2" stroke="#2a3f9a" stroke-width="1.4" fill="none"/></svg></div>
 <div class="abs body">
  <div class="abs gh"></div>
  <div class="abs" style="left:111px;top:0;width:1px;height:25px;background:#d0d0d0"></div>
  <div class="abs" style="left:181px;top:0;width:1px;height:25px;background:#d0d0d0"></div>
  <div class="abs" style="left:112px;top:27px;width:69px;height:22px;background:#b8cfee"></div>
  <div class="abs" style="left:2px;top:27px;width:8px;height:22px;background:linear-gradient(90deg,#e2e2e2,#f1f1f1)"></div>
  <div class="abs" style="left:2px;top:51px;width:8px;height:22px;background:linear-gradient(90deg,#e2e2e2,#f1f1f1)"></div>
  <div class="abs" style="left:2px;top:49px;width:180px;height:1px;background:#ededed"></div>
  <div class="abs" style="left:2px;top:73px;width:180px;height:1px;background:#ededed"></div>
  <div class="abs" style="left:111px;top:27px;width:1px;height:46px;background:#ededed"></div>
  <div class="abs" style="left:181px;top:27px;width:1px;height:46px;background:#ededed"></div>
 </div>
 <div class="abs foot">
  <svg class="abs" style="left:4.7px;top:7px" width="16" height="16" viewBox="0 0 16 16"><circle cx="8" cy="8" r="7" fill="#57b34a" stroke="#2e7d2a" stroke-width="1"/><circle cx="8" cy="8" r="5.4" fill="none" stroke="#c9efc0" stroke-width="1"/><path d="M4.6 8.2 L7 10.6 L11.4 5.6" fill="none" stroke="#fff" stroke-width="1.8"/></svg>
  <div class="abs" style="left:24px;top:8px;font:12px 'Liberation Sans',sans-serif;color:#4a5464">Save</div>
  <svg class="abs" style="left:57.7px;top:7px" width="16" height="16" viewBox="0 0 16 16"><circle cx="8" cy="8" r="7" fill="#e8584e" stroke="#c23a33" stroke-width="1"/><circle cx="8" cy="8" r="5.4" fill="none" stroke="#f7c3bd" stroke-width="1"/><path d="M5.3 5.3 L10.7 10.7 M10.7 5.3 L5.3 10.7" fill="none" stroke="#fff" stroke-width="1.8"/></svg>
  <div class="abs" style="left:77px;top:8px;font:12px 'Liberation Sans',sans-serif;color:#4a5464">Cancel</div>
 </div>
</div>
<div id="legend" class="abs">
 <div class="abs" style="left:11px;top:20px;width:42px;height:30px;box-sizing:border-box;border:3px solid #424242;border-radius:2px;background:linear-gradient(#f2a33a,#e8942a)"></div>
 <svg class="abs" style="left:12px;top:58px" width="40" height="27" viewBox="0 0 40 27"><rect x="0" y="0" width="13.4" height="13.5" fill="#f4644e"/><rect x="13.3" y="0" width="13.4" height="13.5" fill="#df3229"/><rect x="26.6" y="0" width="13.4" height="13.5" fill="#ef503f"/><rect x="0" y="13.4" width="13.4" height="13.6" fill="#fa8a70"/><rect x="13.3" y="13.4" width="13.4" height="13.6" fill="#ef503f"/><rect x="26.6" y="13.4" width="13.4" height="13.6" fill="#f97b62"/></svg>
 <div class="abs" style="left:11px;top:97px;width:42px;height:29px;box-sizing:border-box;border:3px solid #2e2ecc;border-radius:2px;background:linear-gradient(#97a5d6,#8696cc)"></div>
</div>
<div class="abs" style="left:891px;top:598px;font:9.25px 'Liberation Sans',sans-serif;color:#333;white-space:nowrap">© <span style="color:#4a7ec4">OpenStreetMap</span> contributors</div>
<div class="abs" style="left:700px;top:609px;width:317px;height:1.5px;background:linear-gradient(90deg,rgba(230,140,140,0),#e59a9a 40%,#e08a8a)"></div>
<svg class="abs" style="left:0;top:0;pointer-events:none" width="1024" height="622" viewBox="0 0 1024 622" font-family="Liberation Sans, sans-serif">
<g font-size="12.5" fill="#2a2a2a">
<text x="562.1" y="116.5" textLength="31.8" lengthAdjust="spacingAndGlyphs" fill="#333">Name</text>
<text x="673" y="116.5" textLength="29.9" lengthAdjust="spacingAndGlyphs" fill="#333">Value</text>
<text x="568" y="140.9" textLength="75.8" lengthAdjust="spacingAndGlyphs">measure_name</text>
<text x="673.4" y="140.9" textLength="12" lengthAdjust="spacingAndGlyphs">R1</text>
<text x="568" y="164.4" textLength="69.5" lengthAdjust="spacingAndGlyphs">measure_type</text>
<text x="673.4" y="164.4" textLength="53.4" lengthAdjust="spacingAndGlyphs" fill="#444">Relocation</text>
</g>
<g font-size="18.3" font-weight="bold" fill="#000">
<text x="77.6" y="494.1" textLength="71.7" lengthAdjust="spacingAndGlyphs">Buildings</text>
<text x="75.5" y="531.3" textLength="90.4" lengthAdjust="spacingAndGlyphs">Debris flow</text>
<text x="79.6" y="565.3" textLength="115.9" lengthAdjust="spacingAndGlyphs">Measure (Area</text>
<text x="74.6" y="587.2" textLength="126.7" lengthAdjust="spacingAndGlyphs">to be relocated)</text>
</g>
</svg>
</body></html>
